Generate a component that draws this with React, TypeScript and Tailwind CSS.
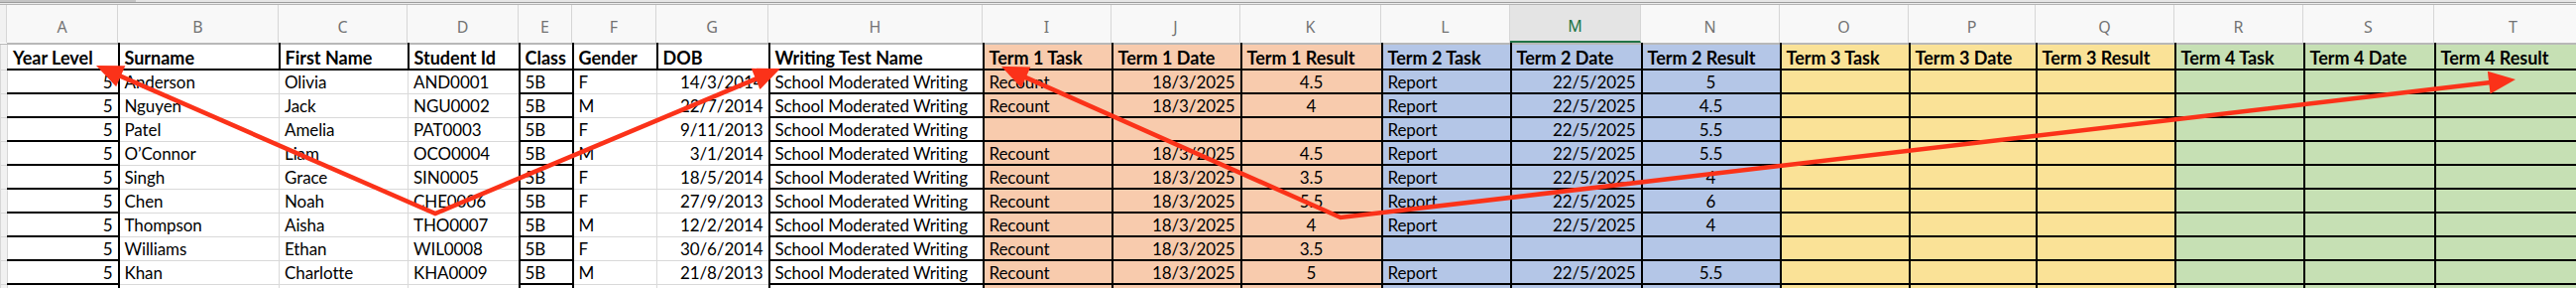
import React from "react";

type Col = {
  letter: string;
  w: string;
  lw: string;
  bg: string;
  kind: "A" | "black" | "gray";
  align: string;
};

const COLS: Col[] = [
  { letter: "A", w: "w-[112px]", lw: "w-[112px]", bg: "bg-white", kind: "A", align: "text-right" },
  { letter: "B", w: "w-[162px]", lw: "w-[162px]", bg: "bg-white", kind: "gray", align: "text-left" },
  { letter: "C", w: "w-[130px]", lw: "w-[130px]", bg: "bg-white", kind: "gray", align: "text-left" },
  { letter: "D", w: "w-[112px]", lw: "w-[112px]", bg: "bg-white", kind: "gray", align: "text-left" },
  { letter: "E", w: "w-[54px]", lw: "w-[54px]", bg: "bg-white", kind: "black", align: "text-left" },
  { letter: "F", w: "w-[85px]", lw: "w-[85px]", bg: "bg-white", kind: "gray", align: "text-left" },
  { letter: "G", w: "w-[113px]", lw: "w-[113px]", bg: "bg-white", kind: "gray", align: "text-right" },
  { letter: "H", w: "w-[216px]", lw: "w-[216px]", bg: "bg-white", kind: "black", align: "text-left" },
  { letter: "I", w: "w-[130px]", lw: "w-[130px]", bg: "bg-[#f8cbad]", kind: "black", align: "text-left" },
  { letter: "J", w: "w-[130px]", lw: "w-[130px]", bg: "bg-[#f8cbad]", kind: "black", align: "text-right" },
  { letter: "K", w: "w-[142px]", lw: "w-[142px]", bg: "bg-[#f8cbad]", kind: "black", align: "text-center" },
  { letter: "L", w: "w-[130px]", lw: "w-[130px]", bg: "bg-[#b4c6e7]", kind: "black", align: "text-left" },
  { letter: "M", w: "w-[132px]", lw: "w-[132px]", bg: "bg-[#b4c6e7]", kind: "black", align: "text-right" },
  { letter: "N", w: "w-[140px]", lw: "w-[140px]", bg: "bg-[#b4c6e7]", kind: "black", align: "text-center" },
  { letter: "O", w: "w-[130px]", lw: "w-[130px]", bg: "bg-[#fae297]", kind: "black", align: "text-left" },
  { letter: "P", w: "w-[128px]", lw: "w-[128px]", bg: "bg-[#fae297]", kind: "black", align: "text-left" },
  { letter: "Q", w: "w-[140px]", lw: "w-[140px]", bg: "bg-[#fae297]", kind: "black", align: "text-left" },
  { letter: "R", w: "w-[130px]", lw: "w-[130px]", bg: "bg-[#c6e0b4]", kind: "black", align: "text-left" },
  { letter: "S", w: "w-[132px]", lw: "w-[132px]", bg: "bg-[#c6e0b4]", kind: "black", align: "text-left" },
  { letter: "T", w: "w-[160px]", lw: "w-[160px]", bg: "bg-[#c6e0b4]", kind: "black", align: "text-left" },
];

const HEADERS = [
  "Year Level", "Surname", "First Name", "Student Id", "Class", "Gender", "DOB",
  "Writing Test Name", "Term 1 Task", "Term 1 Date", "Term 1 Result", "Term 2 Task",
  "Term 2 Date", "Term 2 Result", "Term 3 Task", "Term 3 Date", "Term 3 Result",
  "Term 4 Task", "Term 4 Date", "Term 4 Result",
];

const SMW = "School Moderated Writing";
const ROWS: string[][] = [
  ["5", "Anderson", "Olivia", "AND0001", "5B", "F", "14/3/2014", SMW, "Recount", "18/3/2025", "4.5", "Report", "22/5/2025", "5"],
  ["5", "Nguyen", "Jack", "NGU0002", "5B", "M", "22/7/2014", SMW, "Recount", "18/3/2025", "4", "Report", "22/5/2025", "4.5"],
  ["5", "Patel", "Amelia", "PAT0003", "5B", "F", "9/11/2013", SMW, "", "", "", "Report", "22/5/2025", "5.5"],
  ["5", "O\u2019Connor", "Liam", "OCO0004", "5B", "M", "3/1/2014", SMW, "Recount", "18/3/2025", "4.5", "Report", "22/5/2025", "5.5"],
  ["5", "Singh", "Grace", "SIN0005", "5B", "F", "18/5/2014", SMW, "Recount", "18/3/2025", "3.5", "Report", "22/5/2025", "4"],
  ["5", "Chen", "Noah", "CHE0006", "5B", "F", "27/9/2013", SMW, "Recount", "18/3/2025", "5.5", "Report", "22/5/2025", "6"],
  ["5", "Thompson", "Aisha", "THO0007", "5B", "M", "12/2/2014", SMW, "Recount", "18/3/2025", "4", "Report", "22/5/2025", "4"],
  ["5", "Williams", "Ethan", "WIL0008", "5B", "F", "30/6/2014", SMW, "Recount", "18/3/2025", "3.5", "", "", ""],
  ["5", "Khan", "Charlotte", "KHA0009", "5B", "M", "21/8/2013", SMW, "Recount", "18/3/2025", "5", "Report", "22/5/2025", "5.5"],
  [],
];

function borderFor(kind: Col["kind"]) {
  if (kind === "A") return "border-2 border-black border-l border-l-[#d9d9d9]";
  if (kind === "black") return "border-2 border-black";
  return "border border-[#d9d9d9]";
}

function headBorder(kind: Col["kind"]) {
  if (kind === "A") return "border-2 border-black border-t-[#b8b8b8] border-l border-l-[#d9d9d9]";
  return "border-2 border-black border-t-[#b8b8b8]";
}

const RED = "#fb3219";

function arrowParts(tx: number, ty: number, fx: number, fy: number) {
  const L = 27;
  const W = 11.5;
  const dx = tx - fx;
  const dy = ty - fy;
  const len = Math.hypot(dx, dy);
  const ux = dx / len;
  const uy = dy / len;
  const bx = tx - ux * L;
  const by = ty - uy * L;
  const nx = -uy;
  const ny = ux;
  return {
    poly: `${tx},${ty} ${bx + nx * W},${by + ny * W} ${bx - nx * W},${by - ny * W}`,
    end: `${tx - ux * (L - 6)},${ty - uy * (L - 6)}`,
  };
}

function VArrow({ vx, vy, a, b }: { vx: number; vy: number; a: [number, number]; b: [number, number] }) {
  const pa = arrowParts(a[0], a[1], vx, vy);
  const pb = arrowParts(b[0], b[1], vx, vy);
  return (
    <g>
      <polyline
        points={`${pa.end} ${vx},${vy} ${pb.end}`}
        fill="none"
        stroke={RED}
        strokeWidth={4.6}
        strokeLinejoin="miter"
      />
      <polygon points={pa.poly} fill={RED} />
      <polygon points={pb.poly} fill={RED} />
    </g>
  );
}

export default function App() {
  return (
    <div className="relative w-[2598px] h-[290px] overflow-hidden bg-white font-['Lato',sans-serif] text-black">
      {/* top chrome */}
      <div className="flex h-[2px]">
        <div className="w-[137px] bg-[#c4c4c4]" />
        <div className="flex-1 bg-[#e6e6e6]" />
      </div>
      <div className="h-[1px] bg-[#9c9c9c]" />
      <div className="h-[1px] bg-[#ececec]" />
      <div className="h-[1px] bg-[#b4b4b4]" />

      {/* column letters */}
      <div className="flex h-[38px] bg-[#f8f8f8] whitespace-nowrap">
        <div className="w-[7px] shrink-0 border-r border-[#d6d6d6] bg-[#f1f1f1]" />
        {COLS.map((c) =>
          c.letter === "M" ? (
            <div
              key={c.letter}
              className={`${c.lw} shrink-0 flex items-center justify-center border-r border-[#d6d6d6] bg-[#e4e4e4] text-[16px] text-[#217346] border-b-2 border-b-[#217346] pt-[5px] font-['Noto_Sans',sans-serif]`}
            >
              {c.letter}
            </div>
          ) : (
            <div
              key={c.letter}
              className={`${c.lw} shrink-0 flex items-center justify-center border-r border-[#d6d6d6] text-[16px] text-[#737373] pt-[5px] font-['Noto_Sans',sans-serif]`}
            >
              {c.letter}
            </div>
          )
        )}
      </div>

      {/* sheet */}
      <table className="table-fixed border-collapse w-[2615px] text-[17px] leading-[20px] tracking-[-0.1px]">
        <colgroup>
          <col className="w-[7px]" />
          {COLS.map((c) => (
            <col key={c.letter} className={c.w} />
          ))}
        </colgroup>
        <tbody>
          <tr className="h-[26px]">
            <td className="p-0 bg-[#f1f1f1] border border-[#d6d6d6] border-t-[#b8b8b8]" />
            {COLS.map((c, i) => (
              <td
                key={c.letter}
                className={`px-[5px] pt-[2px] pb-0 align-middle overflow-hidden whitespace-nowrap font-bold text-[18px] tracking-normal text-left ${c.bg} ${headBorder(c.kind)}`}
              >
                {HEADERS[i]}
              </td>
            ))}
          </tr>
          {ROWS.map((row, r) => (
            <tr key={r} className="h-[24px]">
              <td className="p-0 bg-[#f1f1f1] border border-[#d6d6d6]" />
              {COLS.map((c, i) => (
                <td
                  key={c.letter}
                  className={`px-[5px] pt-[1px] pb-0 align-middle overflow-hidden whitespace-nowrap ${c.align} ${c.bg} ${borderFor(c.kind)}`}
                >
                  {row[i] ?? ""}
                </td>
              ))}
            </tr>
          ))}
        </tbody>
      </table>

      {/* annotation arrows */}
      <svg
        className="absolute left-0 top-0 pointer-events-none"
        width={2598}
        height={290}
        viewBox="0 0 2598 290"
      >
        <VArrow vx={439} vy={215} a={[97, 66]} b={[787, 69]} />
        <VArrow vx={1352} vy={219} a={[1010, 67]} b={[2537, 80]} />
      </svg>
    </div>
  );
}
